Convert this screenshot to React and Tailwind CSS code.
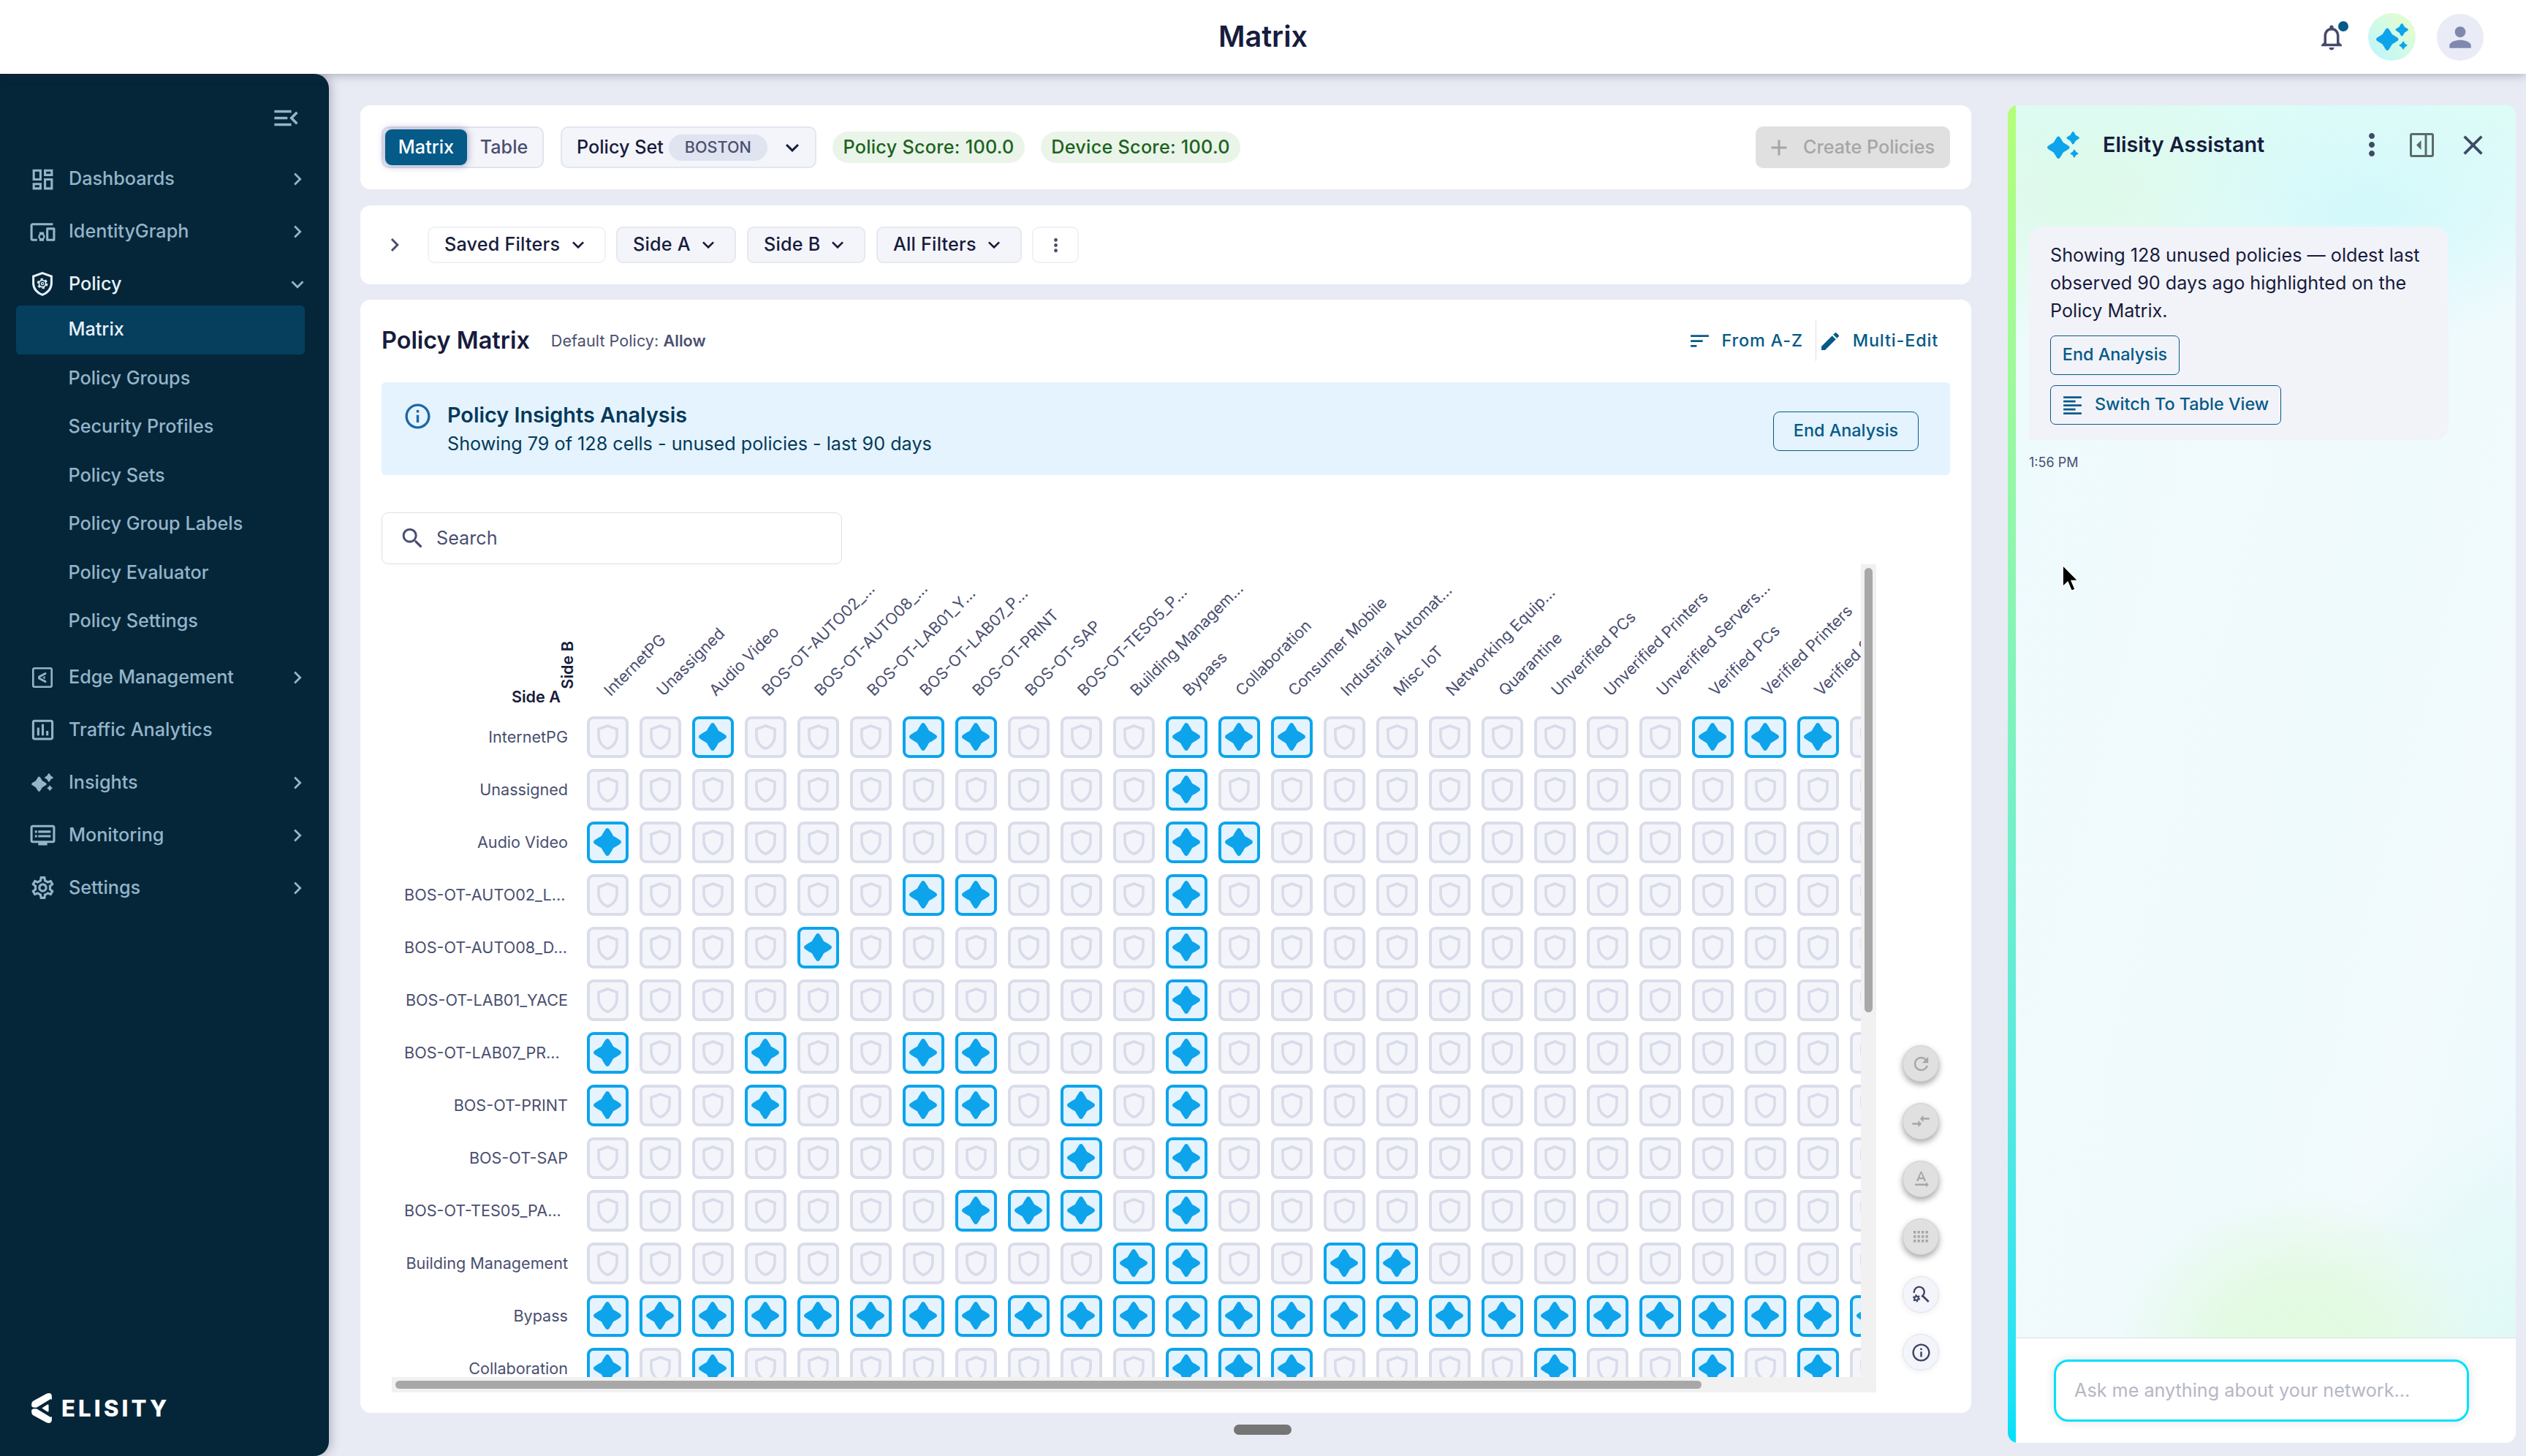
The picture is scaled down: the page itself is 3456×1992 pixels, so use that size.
import clsx from "clsx";
import {
  MdAdd,
  MdChevronRight,
  MdClose,
  MdCompareArrows,
  MdDevicesOther,
  MdDvr,
  MdEdit,
  MdFormatAlignLeft,
  MdInfoOutline,
  MdInsertChartOutlined,
  MdKeyboardArrowDown,
  MdMenuOpen,
  MdMoreVert,
  MdNotificationsNone,
  MdOutlineDashboard,
  MdOutlineSettings,
  MdPerson,
  MdRefresh,
  MdSearch,
  MdSort,
  MdTextRotationNone,
} from "react-icons/md";

const POLICY_LINKS = [
  "Matrix",
  "Policy Groups",
  "Security Profiles",
  "Policy Sets",
  "Policy Group Labels",
  "Policy Evaluator",
  "Policy Settings",
];

const COLUMNS = [
  "InternetPG",
  "Unassigned",
  "Audio Video",
  "BOS-OT-AUTO02_...",
  "BOS-OT-AUTO08_...",
  "BOS-OT-LAB01_Y...",
  "BOS-OT-LAB07_P...",
  "BOS-OT-PRINT",
  "BOS-OT-SAP",
  "BOS-OT-TES05_P...",
  "Building Managem...",
  "Bypass",
  "Collaboration",
  "Consumer Mobile",
  "Industrial Automat...",
  "Misc IoT",
  "Networking Equip...",
  "Quarantine",
  "Unverified PCs",
  "Unverified Printers",
  "Unverified Servers...",
  "Verified PCs",
  "Verified Printers",
  "Verified Servers",
  "",
];

const ALL = COLUMNS.map((_, i) => i);

const ROWS = [
  { name: "InternetPG", unused: [2, 6, 7, 11, 12, 13, 21, 22, 23] },
  { name: "Unassigned", unused: [11] },
  { name: "Audio Video", unused: [0, 11, 12] },
  { name: "BOS-OT-AUTO02_L...", unused: [6, 7, 11] },
  { name: "BOS-OT-AUTO08_D...", unused: [4, 11] },
  { name: "BOS-OT-LAB01_YACE", unused: [11] },
  { name: "BOS-OT-LAB07_PR...", unused: [0, 3, 6, 7, 11] },
  { name: "BOS-OT-PRINT", unused: [0, 3, 6, 7, 9, 11] },
  { name: "BOS-OT-SAP", unused: [9, 11] },
  { name: "BOS-OT-TES05_PA...", unused: [7, 8, 9, 11] },
  { name: "Building Management", unused: [10, 11, 14, 15] },
  { name: "Bypass", unused: ALL },
  { name: "Collaboration", unused: [0, 2, 11, 12, 13, 18, 21, 23] },
];

const STAR =
  "M19 0q2 0 3 2.2l3.4 5.4q1.2 3.8 5 5l5.4 3.4q2.2 1 2.2 3q0 2-2.2 3l-5.4 3.4q-3.8 1.2-5 5l-3.4 5.4q-1 2.2-3 2.2q-2 0-3-2.2l-3.4-5.4q-1.2-3.8-5-5l-5.4-3.4q-2.2-1-2.2-3q0-2 2.2-3l5.4-3.4q3.8-1.2 5-5l3.4-5.4q1-2.2 3-2.2z";

function Sparkles({ className }) {
  return (
    <svg viewBox="0 0 44 37" className={className} fill="currentColor">
      <path d={STAR} transform="translate(0 6.5) scale(.803)" />
      <path d={STAR} transform="translate(26.5 0) scale(.458)" />
      <path d={STAR} transform="translate(31.5 24.5) scale(.29)" />
    </svg>
  );
}

function PolicyShield({ className }) {
  return (
    <svg viewBox="0 0 28 33" className={className} fill="none" stroke="currentColor">
      <path d="M14 1.6 26.4 6v9.5c0 7.4-5.2 13.4-12.4 15.8C6.8 28.9 1.6 22.9 1.6 15.5V6z" strokeWidth="3" />
      <circle cx="14" cy="16" r="4.6" strokeWidth="1.8" />
      <circle cx="14" cy="16" r="6.3" strokeWidth="2" strokeDasharray="3.3 3.3" />
      <circle cx="14" cy="16" r="1.6" strokeWidth="1.3" />
    </svg>
  );
}

function EdgeIcon({ className }) {
  return (
    <svg viewBox="0 0 28 28" className={className} fill="none" stroke="currentColor">
      <rect x="1.3" y="1.3" width="25.4" height="25.4" rx="2" strokeWidth="2.6" />
      <path d="M18 8.5 9.5 13M9.5 15 18 19.5" strokeWidth="3" strokeLinecap="round" />
      <path d="m14.5 14 2.8-1.7v3.4z" fill="currentColor" strokeWidth=".5" />
    </svg>
  );
}

function DotGrid({ className }) {
  return (
    <svg viewBox="0 0 20 16" className={className} fill="currentColor">
      {[0, 6, 12].map((y) => [0, 5.5, 11, 16.5].map((x) => <rect key={`${x}-${y}`} x={x} y={y} width="3.3" height="3.6" />))}
    </svg>
  );
}

function SearchGear({ className }) {
  return (
    <svg viewBox="0 0 24 24" className={className} fill="none" stroke="currentColor">
      <path d="M2.8 9.5A6.7 6.7 0 1 1 13.8 13.3L12.5 14.3" strokeWidth="2.2" />
      <path d="m14 13.5 7.8 7.6" strokeWidth="2.6" />
      <circle cx="5.8" cy="16.5" r="2.6" strokeWidth="2" />
      <circle cx="5.8" cy="16.5" r="4" strokeWidth="1.8" strokeDasharray="2.09 2.09" />
    </svg>
  );
}

function DockIcon({ className }) {
  return (
    <svg viewBox="0 0 33 33" className={className} fill="none" stroke="currentColor" strokeWidth="3">
      <rect x="1.5" y="1.5" width="30" height="30" rx="1.5" />
      <path d="M22 1.5v30" />
      <path d="M15.5 10v13L9 16.5z" fill="currentColor" stroke="none" />
    </svg>
  );
}

function Logo() {
  return (
    <div className="flex items-center gap-[13px] pl-[43px] text-white">
      <svg viewBox="0 0 84 124" className="h-[41px] w-[28px]" fill="currentColor">
        <path d="M0 46Q0 36 8 32L62 2Q84-5 84 14V27Q79 23 73 28L22 59Q4 62 0 54z" />
        <path d="M0 78Q0 88 8 92l54 30q22 7 22-12V97q-5 4-11-1L22 65Q4 62 0 70z" />
        <path d="M43 62 66 47q5-1 5 4v22q0 5-5 4z" />
      </svg>
      <span className="text-[31px] leading-none font-extrabold tracking-[4.2px]">ELISITY</span>
    </div>
  );
}

function NavItem({ icon: Icon, label, arrow = true, iconClass = "size-[37px]" }) {
  return (
    <div className="flex h-[72px] items-center pr-[26px]">
      <div className="flex w-[94px] justify-center pl-[22px]">
        <Icon className={iconClass} />
      </div>
      <span className="flex-1">{label}</span>
      {arrow && <MdChevronRight className="size-[34px]" />}
    </div>
  );
}

function Sidebar() {
  return (
    <aside className="relative z-10 flex w-[450px] shrink-0 flex-col rounded-r-[20px] bg-[#052639] text-[25.2px] font-medium text-[#94b4c9] shadow-[3px_0_14px_rgba(40,40,60,0.28)]">
      <div className="flex h-[108px] items-center justify-end pt-[13px] pr-[37px]">
        <MdMenuOpen className="size-[43px]" />
      </div>
      <NavItem icon={MdOutlineDashboard} label="Dashboards" />
      <NavItem icon={MdDevicesOther} label="IdentityGraph" />
      <div className="flex h-[65px] items-center pt-[6px] pr-[26px] text-[#e6f2fa]">
        <div className="flex w-[94px] justify-center pl-[22px]">
          <PolicyShield className="h-[33px] w-[28px]" />
        </div>
        <span className="flex-1">Policy</span>
        <MdKeyboardArrowDown className="size-[34px] text-[#94b4c9]" />
      </div>
      {POLICY_LINKS.map((label, i) => (
        <div
          key={label}
          className={clsx(
            "mr-[33px] ml-[22px] flex h-[66.5px] items-center rounded-md pl-[71.5px]",
            i === 0 && "bg-[#063f5e] text-[#e6f2fa]"
          )}
        >
          {label}
        </div>
      ))}
      <div className="mt-[7px]">
        <NavItem icon={EdgeIcon} label="Edge Management" iconClass="size-[28px]" />
        <NavItem icon={MdInsertChartOutlined} label="Traffic Analytics" arrow={false} />
        <NavItem icon={Sparkles} label="Insights" iconClass="h-[25px] w-[30px]" />
        <NavItem icon={MdDvr} label="Monitoring" />
        <NavItem icon={MdOutlineSettings} label="Settings" />
      </div>
      <div className="mt-auto pb-[45px]">
        <Logo />
      </div>
    </aside>
  );
}

function Header() {
  return (
    <header className="relative z-20 grid h-[101px] shrink-0 grid-cols-[1fr_auto_1fr] items-center bg-white shadow-[0_2px_12px_rgba(40,40,60,0.3)]">
      <h1 className="col-start-2 text-[39.6px] font-semibold text-[#171c3d]">Matrix</h1>
      <div className="flex items-center justify-end pr-[58px]">
        <div className="relative mr-[29px]">
          <MdNotificationsNone className="size-[42px] text-[#454a6b]" />
          <span className="absolute -top-[1px] -right-[2px] size-[14px] rounded-full bg-[#055a8a]" />
        </div>
        <div className="mr-[29px] flex size-[65px] items-center justify-center rounded-full bg-linear-to-tr from-[#bdf3ff] via-[#d2fbe6] to-[#eafdc4]">
          <Sparkles className="h-[37px] w-[44px] text-[#0da4ec]" />
        </div>
        <div className="flex size-[64px] items-center justify-center rounded-full bg-[#e9ebf6]">
          <MdPerson className="size-[44px] text-[#8088ae]" />
        </div>
      </div>
    </header>
  );
}

function Toolbar() {
  return (
    <section className="flex h-[115px] shrink-0 items-center rounded-[14px] bg-white px-[29px] text-[25.2px] font-medium">
      <div className="flex h-[57px] w-[222px] items-center rounded-[10px] border-2 border-[#e0e3ef] bg-[#f4f5fa] pl-[3px]">
        <div className="flex h-[49px] w-[112px] items-center justify-center rounded-[9px] bg-[#055a88] text-white shadow-[0_0_10px_2px_rgba(60,60,130,0.35)]">
          Matrix
        </div>
        <div className="flex-1 pr-[2px] text-center text-[#4a4f70]">Table</div>
      </div>
      <div className="ml-[23px] flex h-[57px] w-[350px] items-center rounded-[10px] border-2 border-[#e3e6f1] bg-[#f4f5fa] pl-[20px] text-[#171c3d]">
        Policy Set
        <span className="ml-[7px] flex h-[36px] w-[135px] items-center justify-center rounded-full bg-[#e0e3f0] text-[21.6px] text-[#4a4f70]">
          BOSTON
        </span>
        <MdKeyboardArrowDown className="ml-[16px] size-[36px]" />
      </div>
      <div className="ml-[22px] flex h-[43px] w-[263px] items-center justify-center rounded-full bg-[#eaf4e9] tracking-[0.27px] text-[#1c6320]">
        Policy Score: 100.0
      </div>
      <div className="ml-[22px] flex h-[43px] w-[273px] items-center justify-center rounded-full bg-[#eaf4e9] tracking-[0.27px] text-[#1c6320]">
        Device Score: 100.0
      </div>
      <div className="ml-auto flex h-[57px] w-[266px] items-center rounded-[10px] bg-[#e0e0e0] pl-[14px] text-[#a6a6a6]">
        <MdAdd className="mr-[15px] size-[36px]" />
        Create Policies
      </div>
    </section>
  );
}

function FilterButton({ label, className }) {
  return (
    <div className={clsx("flex h-[50px] items-center justify-between rounded-[9px] border-2 pr-[20px] pl-[21px] tracking-[0.2px]", className)}>
      {label}
      <MdKeyboardArrowDown className="size-[32px]" />
    </div>
  );
}

function FilterBar() {
  return (
    <section className="mt-[22px] flex h-[108px] shrink-0 items-center rounded-[14px] bg-white text-[25.2px] font-medium text-[#171c3d]">
      <MdChevronRight className="mr-[27px] ml-[29px] size-[36px] text-[#4a4f70]" />
      <FilterButton label="Saved Filters" className="w-[244px] border-[#f1f2f8]" />
      <FilterButton label="Side A" className="ml-[14px] w-[164px] border-[#e6e8f2] bg-[#f4f5fa]" />
      <FilterButton label="Side B" className="ml-[15px] w-[162px] border-[#e6e8f2] bg-[#f4f5fa]" />
      <FilterButton label="All Filters" className="ml-[15px] w-[199px] border-[#e6e8f2] bg-[#f4f5fa]" />
      <div className="ml-[14px] flex h-[50px] w-[64px] items-center justify-center rounded-[9px] border-2 border-[#f1f2f8]">
        <MdMoreVert className="size-[29px] text-[#4a4f70]" />
      </div>
    </section>
  );
}

function Cell({ unused }) {
  return (
    <div
      className={clsx(
        "flex size-[57px] items-center justify-center rounded-[9px] border-4",
        unused ? "border-[#0da4ec] bg-[#e4f3fd]" : "border-[#dadde9] bg-[#f4f5fa]"
      )}
    >
      {unused ? (
        <svg viewBox="0 0 38 38" className="size-[38px] shrink-0 text-[#0da4ec]" fill="currentColor">
          <path d={STAR} />
        </svg>
      ) : (
        <svg viewBox="0 0 29 35" className="h-[35px] w-[29px] text-[#d8dbe9]" fill="none" stroke="currentColor">
          <path d="M14.5 2 27 6.5V16c0 8-5.5 15-12.5 17.3C7.5 31 2 24 2 16V6.5z" strokeWidth="3.6" />
        </svg>
      )}
    </div>
  );
}

function MatrixGrid() {
  return (
    <div className="flex h-[1133px] w-[2031px] flex-col bg-[#f1f1f1]">
      <div className="flex h-[1112px]">
        <div className="w-[2010px] overflow-hidden bg-white text-[21.6px] leading-[26px] text-[#4a4f70]">
          <div className="flex h-[200px]">
            <div className="flex w-[259px] shrink-0 items-end justify-end pr-[6px] font-semibold text-[#171c3d]">
              <span className="-mr-[4px] pb-[6px]">Side A</span>
              <span className="mb-[29px] rotate-180 [writing-mode:vertical-rl]">Side B</span>
            </div>
            {COLUMNS.map((name, i) => (
              <div key={i} className="flex w-[72px] shrink-0 items-end pb-[15px] pl-[44px]">
                <span className="w-0 origin-bottom-left -rotate-45 whitespace-nowrap">{name}</span>
              </div>
            ))}
          </div>
          {ROWS.map((row) => (
            <div key={row.name} className="flex h-[72px] items-center">
              <div
                className={clsx(
                  "w-[259px] shrink-0 pr-[18px] pl-[17px] whitespace-nowrap",
                  row.name.endsWith("...") ? "text-left" : "text-right"
                )}
              >
                {row.name}
              </div>
              {ALL.map((i) => (
                <div key={i} className="flex w-[72px] shrink-0 justify-center">
                  <Cell unused={row.unused.includes(i)} />
                </div>
              ))}
            </div>
          ))}
        </div>
        <div className="w-[21px] px-[5px] pt-[5px]">
          <div className="h-[608px] rounded-full bg-[#a8a8a8]" />
        </div>
      </div>
      <div className="flex h-[21px] items-center pl-[5px]">
        <div className="h-[11px] w-[1787px] rounded-full bg-[#a8a8a8]" />
      </div>
    </div>
  );
}

function FloatButton({ icon: Icon, disabled, iconClass = "size-[29px]" }) {
  return (
    <div
      className={clsx(
        "flex size-[50px] items-center justify-center rounded-full border",
        disabled
          ? "border-[#cfcfdc] bg-[#e0e0e0] text-[#a6a6a6] shadow-[0_4px_8px_rgba(0,0,0,0.35)]"
          : "border-[#e0e3f0] bg-[#f4f5fa] text-[#3d4263] shadow-[0_1px_8px_rgba(0,0,0,0.08)]"
      )}
    >
      <Icon className={iconClass} />
    </div>
  );
}

function PolicyMatrix() {
  return (
    <section className="mt-[21px] flex h-[1523px] shrink-0 flex-col rounded-[14px] bg-white px-[29px] pt-[29px]">
      <div className="flex h-[55px] items-center">
        <h2 className="text-[32.4px] font-semibold text-[#171c3d]">Policy Matrix</h2>
        <span className="ml-[29px] text-[21.6px] tracking-[0.05px] text-[#4a4f70]">
          Default Policy: <b className="font-semibold">Allow</b>
        </span>
        <div className="ml-auto flex h-full items-center text-[23.4px] font-medium tracking-[0.85px] text-[#055a88]">
          <MdSort className="mr-[13px] size-[33px]" />
          <span className="pb-[2px]">From A-Z</span>
          <div className="mr-[3px] ml-[17px] h-full w-px bg-[#dcdfea]" />
          <MdEdit className="mr-[15px] size-[32px]" />
          <span className="pr-[16px] pb-[2px]">Multi-Edit</span>
        </div>
      </div>

      <div className="mt-[29px] flex h-[127px] items-center rounded-md bg-[#e4f3fd] pr-[43px] pl-[29px]">
        <MdInfoOutline className="-mt-[34px] size-[41px] text-[#1d67a8]" />
        <div className="ml-[20px] text-[#04395a]">
          <div className="text-[28.8px] leading-[40px] font-semibold">Policy Insights Analysis</div>
          <div className="text-[25.2px] leading-[38px]">Showing 79 of 128 cells - unused policies - last 90 days</div>
        </div>
        <div className="mt-[7px] ml-auto flex h-[54px] w-[199px] items-center justify-center rounded-[9px] border border-[#055a88] pb-[2px] text-[23.4px] font-medium text-[#055a88]">
          End Analysis
        </div>
      </div>

      <div className="mt-[51px] flex h-[71px] w-[630px] shrink-0 items-center rounded-[9px] border border-[#dcdfea] pl-[23px] text-[25.2px] text-[#4a4f70]">
        <MdSearch className="mr-[14px] size-[37px]" />
        Search
      </div>

      <div className="flex pl-[14px]">
        <MatrixGrid />
        <div className="ml-[36px] flex flex-col justify-end gap-[29px] pb-[30px]">
          <FloatButton icon={MdRefresh} disabled />
          <FloatButton icon={MdCompareArrows} disabled iconClass="size-[28px]" />
          <FloatButton icon={MdTextRotationNone} disabled />
          <FloatButton icon={DotGrid} disabled iconClass="h-[16px] w-[20px]" />
          <FloatButton icon={SearchGear} iconClass="size-[25px]" />
          <FloatButton icon={MdInfoOutline} />
        </div>
      </div>
    </section>
  );
}

function Assistant() {
  return (
    <section className="mt-[43px] mr-[14px] flex h-[1830px] w-[695px] overflow-hidden rounded-[14px]">
      <div className="w-[11px] shrink-0 bg-linear-to-b from-[#b4ff78] to-[#00e0fb]" />
      <div className="flex flex-1 flex-col">
        <div className="flex flex-1 flex-col bg-[#f3fafd] bg-[radial-gradient(ellipse_260px_220px_at_390px_1705px,#e2fbdf_0%,#e4fae4_45%,transparent_100%),radial-gradient(ellipse_280px_300px_at_684px_1690px,#dff9f6_0%,transparent_100%),radial-gradient(ellipse_300px_180px_at_480px_150px,#d2f9fb_0%,transparent_100%),radial-gradient(ellipse_330px_220px_at_90px_130px,#defae9_0%,transparent_100%),linear-gradient(180deg,#dcfcf7_0px,#dffbf8_70px,transparent_250px),linear-gradient(105deg,#ecfbfd_0%,#f1fafd_35%,#effafd_60%,#f2fafd_78%,#ebfafd_100%)]">
          <div className="flex h-[108px] items-center pr-[36px] pl-[43px] text-[#171c3d]">
            <Sparkles className="h-[37px] w-[44px] text-[#0da4ec]" />
            <span className="ml-[32px] text-[28.8px] font-semibold">Elisity Assistant</span>
            <MdMoreVert className="ml-auto size-[48px] text-[#3f4a66]" />
            <DockIcon className="ml-[28px] size-[33px] text-[#5c6a68]" />
            <MdClose className="ml-[31px] size-[45px] text-[#3f4a66]" />
          </div>
          <div className="mt-[58px] ml-[18px] h-[292px] w-[574px] rounded-[20px] rounded-bl-none bg-[#f2f3f8] px-[29px] pt-[20px] text-[25.2px] leading-[38px] text-[#171c3d]">
            <p className="whitespace-nowrap">
              Showing 128 unused policies — oldest last
              <br />
              observed 90 days ago highlighted on the
              <br />
              Policy Matrix.
            </p>
            <div className="mt-[15px] flex h-[54px] w-[177px] items-center justify-center rounded-[7px] border border-[#055a88] pb-[2px] text-[23.4px] font-medium text-[#055a88]">
              End Analysis
            </div>
            <div className="mt-[14px] flex h-[54px] w-[316px] items-center rounded-[7px] border border-[#055a88] pl-[13px] text-[23.4px] font-medium text-[#055a88]">
              <MdFormatAlignLeft className="mr-[14px] size-[33px]" />
              <span className="pb-[2px]">Switch To Table View</span>
            </div>
          </div>
          <div className="mt-[17px] ml-[18px] text-[18px] leading-[27px] text-[#4a4f70]">1:56 PM</div>
        </div>
        <div className="h-[144px] border-t border-[#dcdfe2] bg-white pt-[29px] pl-[52px]">
          <div className="flex h-[85px] w-[568px] items-center rounded-[20px] border-[3px] border-[#00e0fb] pl-[25px] text-[25.2px] text-[#b5b7c6] shadow-[0_0_14px_rgba(0,0,0,0.12)]">
            Ask me anything about your network...
          </div>
        </div>
      </div>
    </section>
  );
}

function Cursor() {
  return (
    <svg viewBox="0 0 20 34" className="absolute top-[771px] left-[2820px] z-30 h-[42px] w-[25px]">
      <path d="M1.5 1.5v24.5l5.6-5.2 4.2 9.7 4.3-1.9-4.1-9.4h7.4z" fill="#000" stroke="#fff" strokeWidth="1.5" />
    </svg>
  );
}

export default function App() {
  return (
    <div className="relative flex h-[1992px] w-[3456px] flex-col overflow-hidden bg-[#e8ebf4] font-['Inter',sans-serif]">
      <Header />
      <div className="flex flex-1">
        <Sidebar />
        <main className="mr-[50px] ml-[43px] flex w-[2204px] flex-col pt-[43px]">
          <Toolbar />
          <FilterBar />
          <PolicyMatrix />
          <div className="mt-[16px] ml-[1195px] h-[14px] w-[79px] rounded-full bg-[#757575]" />
        </main>
        <Assistant />
      </div>
      <Cursor />
    </div>
  );
}
